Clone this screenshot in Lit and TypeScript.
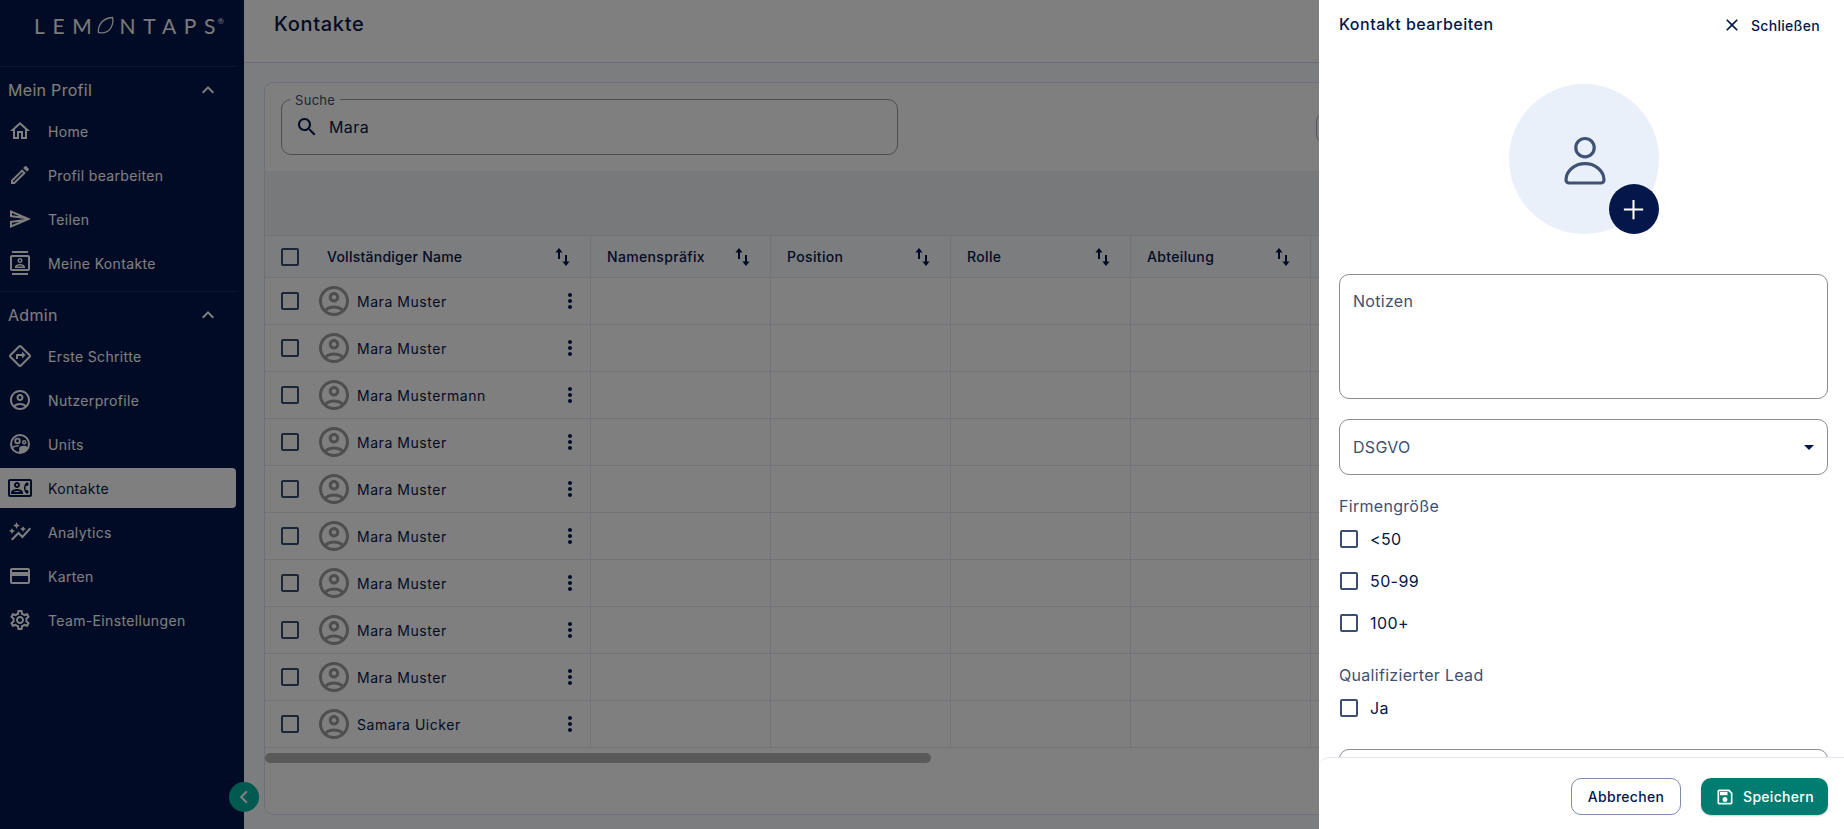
import { LitElement, html, css, svg } from "lit";
import { customElement } from "lit/decorators.js";

const P = {
  home: "M12 5.69l5 4.5V18h-2v-6H9v6H7v-7.81l5-4.5M12 3L2 12h3v8h6v-6h2v6h6v-8h3L12 3z",
  edit: "M3 17.25V21h3.75L17.81 9.94l-3.75-3.75L3 17.25zM5.92 19H5v-.92l9.06-9.06.92.92L5.92 19zM20.71 5.63l-2.34-2.34c-.2-.2-.45-.29-.71-.29s-.51.1-.7.29l-1.83 1.83 3.75 3.75 1.83-1.83c.39-.39.39-1.02 0-1.41z",
  send: "M4.01 6.03l7.51 3.22-7.52-1 .01-2.22m7.5 8.72L4 17.97v-2.22l7.51-1M2.01 3L2 10l15 2-15 2 .01 7L23 12 2.01 3z",
  contacts: "M20 0H4v2h16V0zM4 24h16v-2H4v2zM20 4H4c-1.1 0-2 .9-2 2v12c0 1.1.9 2 2 2h16c1.1 0 2-.9 2-2V6c0-1.1-.9-2-2-2zm0 14H4V6h16v12zm-8-6c1.38 0 2.5-1.12 2.5-2.5S13.38 7 12 7 9.5 8.12 9.5 9.5 10.62 12 12 12zm0-3.5c.55 0 1 .45 1 1s-.45 1-1 1-1-.45-1-1 .45-1 1-1zm5 7.49C17 13.9 13.69 13 12 13s-5 .9-5 2.99V17h10v-1.01zm-8.19-.49c.61-.52 2.03-1 3.19-1 1.17 0 2.59.48 3.2 1H8.81z",
  directions: "M22.43 10.59l-9.01-9.01c-.75-.75-2.07-.76-2.83 0l-9 9c-.78.78-.78 2.04 0 2.82l9 9c.39.39.9.58 1.41.58.51 0 1.02-.19 1.41-.58l8.99-8.99c.79-.76.8-2.02.03-2.82zm-10.42 10.4l-9-9 9-9 9 9-9 9zM8 11v4h2v-3h4v2.5l3.5-3.5L14 7.5V10H9c-.55 0-1 .45-1 1z",
  account: "M12 2C6.48 2 2 6.48 2 12s4.48 10 10 10 10-4.48 10-10S17.52 2 12 2zM7.35 18.5C8.66 17.56 10.26 17 12 17s3.34.56 4.65 1.5c-1.31.94-2.91 1.5-4.65 1.5s-3.34-.56-4.65-1.5zm10.79-1.38C16.45 15.8 14.32 15 12 15s-4.45.8-6.14 2.12C4.7 15.73 4 13.95 4 12c0-4.42 3.58-8 8-8s8 3.58 8 8c0 1.95-.7 3.73-1.86 5.12zM12 6c-1.93 0-3.5 1.57-3.5 3.5S10.07 13 12 13s3.5-1.57 3.5-3.5S13.93 6 12 6zm0 5c-.83 0-1.5-.67-1.5-1.5S11.17 8 12 8s1.5.67 1.5 1.5S12.83 11 12 11z",
  units: "M12 2a10 10 0 1 1 0 20a10 10 0 1 1 0-20zM12 4a8 8 0 1 0 0 16a8 8 0 1 0 0-16zM9.5 5.8a3.2 3.2 0 1 1 0 6.4a3.2 3.2 0 1 1 0-6.4zM9.5 7.6a1.4 1.4 0 1 0 0 2.8a1.4 1.4 0 1 0 0-2.8zM16.2 8a2.2 2.2 0 1 1 0 4.4a2.2 2.2 0 1 1 0-4.4zM16.2 9.4a.8.8 0 1 0 0 1.6a.8.8 0 1 0 0-1.6zM12 20c-.27 0-.53-.01-.79-.04v-4.07c0-1.42 2.94-2.13 4.4-2.13 1.07 0 2.92.39 3.84 1.15-1.17 2.97-4.06 5.09-7.45 5.09zM9.6 13.2c-1.8 0-3.9.5-5.1 1.5l.5 1.4c1.2-.8 3-1.3 4.6-1.3h.6c.3-.6.7-1.1 1.3-1.4-.6-.2-1.3-.2-1.9-.2z",
  phone: "M22 3H2C.9 3 0 3.9 0 5v14c0 1.1.9 2 2 2h20c1.1 0 1.99-.9 1.99-2L24 5c0-1.1-.9-2-2-2zm0 16H2V5h20v14zm-2.99-1.01l1.99-1.99-1.51-2h-1.64c-.22-.63-.35-1.3-.35-2s.13-1.37.35-2h1.64l1.51-2-1.99-1.99c-1.31.98-2.28 2.37-2.73 3.99-.18.64-.28 1.31-.28 2s.1 1.36.28 2c.45 1.61 1.42 3.01 2.73 3.99zM9 12c1.65 0 3-1.35 3-3s-1.35-3-3-3-3 1.35-3 3 1.35 3 3 3zm0-4c.55 0 1 .45 1 1s-.45 1-1 1-1-.45-1-1 .45-1 1-1zm6 8.59c0-2.5-3.97-3.58-6-3.58s-6 1.08-6 3.58V18h12v-1.41zM5.48 16c.74-.5 2.22-1 3.52-1s2.77.49 3.52 1H5.48z",
  graph: "M14.06 9.94L12 9l2.06-.94L15 6l.94 2.06L18 9l-2.06.94L15 12l-.94-2.06zM4 14l.94-2.06L7 11l-2.06-.94L4 8l-.94 2.06L1 11l2.06.94L4 14zm4.5-5l1.09-2.41L12 5.5l-2.41-1.09L8.5 2 7.41 4.41 5 5.5l2.41 1.09L8.5 9zm-4 11.5l6-6.01 4 4L23 8.93l-1.41-1.41-7.09 7.97-4-4L3 19l1.5 1.5z",
  card: "M20 4H4c-1.11 0-1.99.89-1.99 2L2 18c0 1.11.89 2 2 2h16c1.11 0 2-.89 2-2V6c0-1.11-.89-2-2-2zm0 14H4v-6h16v6zm0-10H4V6h16v2z",
  gear: "M19.43 12.98c.04-.32.07-.64.07-.98 0-.34-.03-.66-.07-.98l2.11-1.65c.19-.15.24-.42.12-.64l-2-3.46c-.09-.16-.26-.25-.44-.25-.06 0-.12.01-.17.03l-2.49 1c-.52-.4-1.08-.73-1.69-.98l-.38-2.65C14.46 2.18 14.25 2 14 2h-4c-.25 0-.46.18-.49.42l-.38 2.65c-.61.25-1.17.59-1.69.98l-2.49-1c-.06-.02-.12-.03-.18-.03-.17 0-.34.09-.43.25l-2 3.46c-.13.22-.07.49.12.64l2.11 1.65c-.04.32-.07.65-.07.98 0 .33.03.66.07.98l-2.11 1.65c-.19.15-.24.42-.12.64l2 3.46c.09.16.26.25.44.25.06 0 .12-.01.17-.03l2.49-1c.52.4 1.08.73 1.69.98l.38 2.65c.03.24.24.42.49.42h4c.25 0 .46-.18.49-.42l.38-2.65c.61-.25 1.17-.59 1.69-.98l2.49 1c.06.02.12.03.18.03.17 0 .34-.09.43-.25l2-3.46c.12-.22.07-.49-.12-.64l-2.11-1.65zm-1.98-1.71c.04.31.05.52.05.73 0 .21-.02.43-.05.73l-.14 1.13.89.7 1.08.84-.7 1.21-1.27-.51-1.04-.42-.9.68c-.43.32-.84.56-1.25.73l-1.06.43-.16 1.13-.2 1.35h-1.4l-.19-1.35-.16-1.13-1.06-.43c-.43-.18-.83-.41-1.23-.71l-.91-.7-1.06.43-1.27.51-.7-1.21 1.08-.84.89-.7-.14-1.13c-.03-.31-.05-.54-.05-.74s.02-.43.05-.73l.14-1.13-.89-.7-1.08-.84.7-1.21 1.27.51 1.04.42.9-.68c.43-.32.84-.56 1.25-.73l1.06-.43.16-1.13.2-1.35h1.39l.19 1.35.16 1.13 1.06.43c.43.18.83.41 1.23.71l.91.7 1.06-.43 1.27-.51.7 1.21-1.07.85-.89.7.14 1.13zM12 8c-2.21 0-4 1.79-4 4s1.79 4 4 4 4-1.79 4-4-1.79-4-4-4zm0 6c-1.1 0-2-.9-2-2s.9-2 2-2 2 .9 2 2-.9 2-2 2z",
  search: "M15.5 14h-.79l-.28-.27C15.41 12.59 16 11.11 16 9.5 16 5.91 13.09 3 9.5 3S3 5.91 3 9.5 5.91 16 9.5 16c1.61 0 3.09-.59 4.23-1.57l.27.28v.79l5 4.99L20.49 19l-4.99-5zm-6 0C7.01 14 5 11.99 5 9.5S7.01 5 9.5 5 14 7.01 14 9.5 11.99 14 9.5 14z",
  save: "M17 3H5c-1.11 0-2 .9-2 2v14c0 1.1.89 2 2 2h14c1.1 0 2-.9 2-2V7l-4-4zm2 16H5V5h11.17L19 7.83V19zm-7-7c-1.66 0-3 1.34-3 3s1.34 3 3 3 3-1.34 3-3-1.34-3-3-3zM6 6h9v4H6z",
  close: "M19 6.41L17.59 5 12 10.59 6.41 5 5 6.41 10.59 12 5 17.59 6.41 19 12 13.41 17.59 19 19 17.59 13.41 12z",
  less: "M12 8l-6 6 1.41 1.41L12 10.83l4.59 4.58L18 14z",
  left: "M15.41 7.41L14 6l-6 6 6 6 1.41-1.41L10.83 12z",
  plus: "M19 12.75h-6.25V19h-1.5v-6.25H5v-1.5h6.25V5h1.5v6.25H19z",
  dots: "M12 8c1.1 0 2-.9 2-2s-.9-2-2-2-2 .9-2 2 .9 2 2 2zm0 2c-1.1 0-2 .9-2 2s.9 2 2 2 2-.9 2-2-.9-2-2-2zm0 6c-1.1 0-2 .9-2 2s.9 2 2 2 2-.9 2-2-.9-2-2-2z",
  caret: "M7 10l5 5 5-5z",
  sort: "M9 3l3.6 4.4H10V14H8V7.4H5.4zM15 10h2v6.6h2.6L16 21l-3.6-4.4H15z",
};

const icon = (name: keyof typeof P, size = 24) => html`<svg class="ic" width=${size} height=${size} viewBox="0 0 24 24" fill="currentColor">${svg`<path d=${P[name]}></path>`}</svg>`;

const NAV1: [keyof typeof P, string][] = [["home", "Home"], ["edit", "Profil bearbeiten"], ["send", "Teilen"], ["contacts", "Meine Kontakte"]];
const NAV2: [keyof typeof P, string][] = [["directions", "Erste Schritte"], ["account", "Nutzerprofile"], ["units", "Units"], ["phone", "Kontakte"], ["graph", "Analytics"], ["card", "Karten"], ["gear", "Team-Einstellungen"]];
const NAMES = ["Mara Muster", "Mara Muster", "Mara Mustermann", "Mara Muster", "Mara Muster", "Mara Muster", "Mara Muster", "Mara Muster", "Mara Muster", "Samara Uicker"];
const COLS = ["Namenspräfix", "Position", "Rolle", "Abteilung", ""];

@customElement("app-root")
export class AppRoot extends LitElement {
  static styles = css`
    :host { display: block; width: 100vw; height: 100vh; overflow: hidden; position: relative; font-family: Inter, "Liberation Sans", sans-serif; color: #04174a; background: #f8fafe; }
    * { box-sizing: border-box; }
    .ic { display: block; flex: none; }
    .app { display: grid; grid-template-columns: 244px 1fr; height: 100%; }

    .side { background: #04174a; color: #fff; display: flex; flex-direction: column; padding-right: 8px; }
    .logo { height: 67px; border-bottom: 1px solid #1f2d5c; padding: 11px 0 0 34px; font-family: Lato, sans-serif; font-weight: 400; font-size: 21px; letter-spacing: 7.7px; display: flex; align-items: flex-start; line-height: 30px; color: #f4f4f4; }
    .logo svg { margin: 5px 5px 0 -3px; flex: none; }
    .logo .s { letter-spacing: 2px; }
    .logo sup { font-size: 8px; letter-spacing: 0; line-height: 14px; vertical-align: 10px; }
    .sec { height: 44px; display: flex; align-items: center; justify-content: space-between; padding: 2px 16px 0 8px; font-size: 16px; letter-spacing: .3px; }
    .nav { display: flex; flex-direction: column; gap: 4px; padding-bottom: 8px; border-bottom: 1px solid #1f2d5c; }
    .nav.two { border-bottom: 0; }
    .sec.two { padding-top: 2px; }
    .item { height: 40px; display: flex; align-items: center; gap: 16px; padding-left: 8px; font-size: 14px; letter-spacing: .35px; border-radius: 0 4px 4px 0; }
    .item.active { background: #fff; color: #04174a; }

    .main { display: flex; flex-direction: column; min-width: 0; }
    .top { height: 63px; flex: none; border-bottom: 1px solid #d5d7e6; background: #fff; padding: 9px 30px 0; font-size: 20px; font-weight: 500; letter-spacing: .7px; line-height: 30px; }
    .content { flex: 1; min-height: 0; padding: 19px 20px 14px; }
    .panel { height: 100%; background: #fff; border: 1px solid #dfe1ef; border-radius: 10px; overflow: hidden; }
    .filters { height: 88px; padding: 16px; display: flex; align-items: flex-start; }
    .search { position: relative; width: 617px; height: 56px; border: 1px solid #9a9a9a; border-radius: 10px; display: flex; align-items: center; gap: 10px; padding-left: 13px; font-size: 16px; letter-spacing: .4px; flex: none; }
    .search label { position: absolute; left: 8px; top: -9px; padding: 0 5px; background: #fff; font-size: 13px; line-height: 18px; letter-spacing: .3px; color: #3f4a66; }
    .fbtn { margin: 14px 0 0 418px; width: 120px; height: 30px; border: 1px solid #a8abbd; border-radius: 8px; flex: none; }
    .band { height: 64px; background: #eff3f4; }
    .tbl { width: 1700px; }
    .row { display: grid; grid-template-columns: 326px repeat(5, 180px); height: 47px; border-bottom: 1px solid #e4e6f0; }
    .row.head { height: 43px; border-top: 1px solid #e4e6f0; font-size: 14px; font-weight: 500; letter-spacing: .35px; background: #f8fafe; }
    .cell { display: flex; align-items: center; border-right: 1px solid #e4e6f0; padding: 0 16px; min-width: 0; }
    .head .cell { justify-content: space-between; padding-right: 16px; }
    .name { gap: 10px; font-size: 14px; letter-spacing: .55px; }
    .head .name { gap: 28px; justify-content: flex-start; letter-spacing: .25px; }
    .head .name span { flex: 1; }
    .box { width: 18px; height: 18px; border: 2px solid #3b4d70; border-radius: 2px; flex: none; }
    .ava { color: #9c9c9c; margin-left: 7px; flex: none; margin-right: -5px; }
    .name b { font-weight: 400; flex: 1; }
    .more { margin-right: -8px; }
    .track { margin-top: 5px; height: 10px; }
    .thumb { height: 10px; background: #b4b4b4; border-radius: 5px; }

    .collapse { position: absolute; left: 229px; top: 782px; width: 30px; height: 30px; border-radius: 50%; background: #02b5a0; color: #fff; display: flex; align-items: center; justify-content: center; }
    .scrim { position: absolute; inset: 0; background: rgba(0,0,0,.5); }

    .drawer { position: absolute; top: 0; right: 0; bottom: 0; width: 525px; background: #fff; display: flex; flex-direction: column; }
    .dh { height: 48px; flex: none; display: flex; align-items: center; justify-content: space-between; padding: 0 24px 0 20px; }
    .dh h2 { margin: 0; font-size: 16px; font-weight: 500; letter-spacing: .5px; }
    .closeb { display: flex; align-items: center; gap: 9px; font-size: 14px; font-weight: 500; letter-spacing: .3px; padding-top: 2px; }
    .body { flex: 1; min-height: 0; overflow: hidden; padding: 36px 16px 0 20px; color: #3f4f70; }
    .pic { width: 150px; height: 150px; border-radius: 50%; background: #eaf0fa; margin: 0 auto 40px; position: relative; display: flex; align-items: center; justify-content: center; }
    .pic > svg { margin: 3px 0 0 2px; }
    .add { position: absolute; right: 0; bottom: 0; width: 50px; height: 50px; border-radius: 50%; background: #04174a; color: #fff; display: flex; align-items: center; justify-content: center; }
    .field { border: 1px solid #8c8c8c; border-radius: 10px; padding: 0 13px; font-size: 16px; letter-spacing: .3px; display: flex; align-items: center; justify-content: space-between; height: 56px; }
    .field.notes { height: 125px; align-items: flex-start; padding-top: 14px; line-height: 24px; margin-bottom: 20px; }
    .field .caret { color: #04174a; margin-right: -7px; }
    .glabel { font-size: 16px; line-height: 24px; margin-top: 19px; letter-spacing: .3px; }
    .opt { height: 42px; display: flex; align-items: center; gap: 12px; padding-left: 1px; color: #04174a; font-size: 16px; letter-spacing: .4px; }
    .next { margin-top: 20px; height: 56px; }
    .foot { height: 72px; flex: none; margin-top: -1px; border-top: 1px solid #e3e6f0; border-top-left-radius: 10px; background: #fff; position: relative; padding: 20px 16px 0 0; display: flex; justify-content: flex-end; gap: 20px; }
    .btn { height: 37px; border-radius: 10px; display: flex; align-items: center; justify-content: center; font-size: 14px; font-weight: 500; letter-spacing: .3px; }
    .cancel { width: 110px; border: 1px solid #7c8bb0; background: #fff; color: #04174a; }
    .ok { width: 127px; background: #017c70; color: #fff; gap: 8px; box-shadow: 0 1px 2px rgba(0,0,0,.2); }
  `;

  private nav(items: [keyof typeof P, string][], cls = "") {
    return html`<div class="nav ${cls}">${items.map(([ic, t]) => html`<div class="item ${t === "Kontakte" ? "active" : ""}">${icon(ic)}<span>${t}</span></div>`)}</div>`;
  }

  render() {
    return html`
      <div class="app">
        <aside class="side">
          <div class="logo">
            <span>LEM</span>
            <svg width="18" height="18" viewBox="0 0 18 18" fill="none" stroke="currentColor" stroke-width="1.3"><path d="M1.5 16.5C.5 10 5 2 15.5 1.5c1.5 6-1.5 15-10 15.3-1.6 0-3-.2-4-.3z"></path></svg>
            <span>NTAP<span class="s">S</span><sup>®</sup></span>
          </div>
          <div class="sec"><span>Mein Profil</span>${icon("less")}</div>
          ${this.nav(NAV1)}
          <div class="sec two"><span>Admin</span>${icon("less")}</div>
          ${this.nav(NAV2, "two")}
        </aside>
        <main class="main">
          <div class="top">Kontakte</div>
          <div class="content">
            <div class="panel">
              <div class="filters">
                <div class="search"><label>Suche</label>${icon("search")}<span>Mara</span></div>
                <div class="fbtn"></div>
              </div>
              <div class="band"></div>
              <div class="tbl">
                <div class="row head">
                  <div class="cell name"><div class="box"></div><span>Vollständiger Name</span>${icon("sort")}</div>
                  ${COLS.map((c) => html`<div class="cell"><span>${c}</span>${c ? icon("sort") : ""}</div>`)}
                </div>
                ${NAMES.map((n) => html`
                  <div class="row">
                    <div class="cell name"><div class="box"></div><span class="ava">${icon("account", 36)}</span><b>${n}</b><span class="more">${icon("dots")}</span></div>
                    ${COLS.map(() => html`<div class="cell"></div>`)}
                  </div>`)}
              </div>
              <div class="track"><div class="thumb" style="width:666px"></div></div>
            </div>
          </div>
        </main>
      </div>
      <div class="collapse">${icon("left", 26)}</div>
      <div class="scrim"></div>
      <section class="drawer">
        <div class="dh">
          <h2>Kontakt bearbeiten</h2>
          <div class="closeb">${icon("close", 20)}<span>Schließen</span></div>
        </div>
        <div class="body">
          <div class="pic">
            <svg width="44" height="49" viewBox="0 0 44 49" fill="none" stroke="#3f5273" stroke-width="3.2"><circle cx="22" cy="11.7" r="9.2"></circle><path d="M6 47h32a3 3 0 0 0 3-3c0-9-8.5-16.4-19-16.4S3 35 3 44a3 3 0 0 0 3 3z"></path></svg>
            <div class="add">${icon("plus", 33)}</div>
          </div>
          <div class="field notes">Notizen</div>
          <div class="field"><span>DSGVO</span><span class="caret">${icon("caret")}</span></div>
          <div class="glabel">Firmengröße</div>
          <div class="opt"><div class="box"></div><span>&lt;50</span></div>
          <div class="opt"><div class="box"></div><span>50-99</span></div>
          <div class="opt"><div class="box"></div><span>100+</span></div>
          <div class="glabel">Qualifizierter Lead</div>
          <div class="opt"><div class="box"></div><span>Ja</span></div>
          <div class="field next"></div>
        </div>
        <div class="foot">
          <div class="btn cancel">Abbrechen</div>
          <div class="btn ok">${icon("save", 20)}<span>Speichern</span></div>
        </div>
      </section>
    `;
  }
}
